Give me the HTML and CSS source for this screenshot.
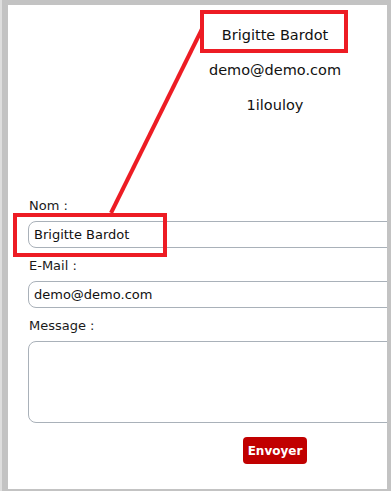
FILE: index.html
```html
<!DOCTYPE html>
<html lang="fr">
<head>
<meta charset="UTF-8">
<title>Contact</title>
<link rel="stylesheet" href="styles.css">
</head>

<body>

<div class="page">
    <div class="main">

        <!-- PROFIL -->
        <div class="profile">
            <p>Brigitte Bardot</p>
            <p>demo@demo.com</p>
            <p>1ilouloy</p>
        </div>

        <!-- FORMULAIRE -->
        <form class="contact" onsubmit="return false">
            <label for="nom">Nom :</label>
            <input type="text" id="nom" value="Brigitte Bardot">

            <label for="email">E-Mail :</label>
            <input type="text" id="email" value="demo@demo.com">

            <label for="message">Message :</label>
            <textarea id="message"></textarea>

            <div class="actions">
                <button type="submit" class="send-btn">Envoyer</button>
            </div>
        </form>

    </div>
</div>

<!-- annotations -->
<svg class="notes" width="391" height="491" viewBox="0 0 391 491">
    <rect x="202" y="12" width="144" height="39" fill="none" stroke="#ed1c24" stroke-width="4"/>
    <rect x="15" y="215" width="150" height="40" fill="none" stroke="#ed1c24" stroke-width="4"/>
    <line x1="202" y1="29" x2="111" y2="213" stroke="#ed1c24" stroke-width="4"/>
</svg>

</body>
</html>
```

FILE: styles.css
```css
html, body {
    margin: 0;
    height: 100%;
}

body {
    font-family: "DejaVu Sans", Verdana, sans-serif;
    background: #c3c3c3;
    border-left: 2px solid #dedede;
    width: 389px;
    height: 491px;
    box-sizing: border-box;
    position: relative;
    overflow: hidden;
    color: #111;
}

.page {
    background: white;
    margin: 5px 2px 0 6px;
    height: 484px;
    overflow: hidden;
}

.main {
    width: 494px;
    margin-left: 20px;
}

/* PROFIL */
.profile {
    text-align: center;
    font-size: 14.5px;
    padding-top: 13px;
}

.profile p {
    margin: 0;
    line-height: 35px;
}

/* FORMULAIRE */
.contact {
    margin-top: 75px;
}

.contact label {
    display: block;
    font-size: 13px;
    line-height: 16px;
    margin: 0 0 7px 1px;
    color: #1a1a1a;
}

.contact input,
.contact textarea {
    display: block;
    box-sizing: border-box;
    width: 100%;
    border: 1px solid #a9b1b9;
    border-radius: 8px;
    font-family: inherit;
    font-size: 13px;
    color: #111;
    padding: 0 5px;
    margin: 0 0 10px 0;
    background: white;
}

.contact input {
    height: 27px;
}

.contact textarea {
    height: 82px;
    resize: none;
    margin-bottom: 14px;
}

.actions {
    text-align: center;
}

.send-btn {
    background: #c10000;
    color: white;
    border: none;
    border-radius: 4px;
    font-family: inherit;
    font-size: 12px;
    font-weight: bold;
    width: 64px;
    height: 27px;
    padding: 0;
    cursor: pointer;
}

.notes {
    position: absolute;
    left: -2px;
    top: 0;
    pointer-events: none;
}
```
